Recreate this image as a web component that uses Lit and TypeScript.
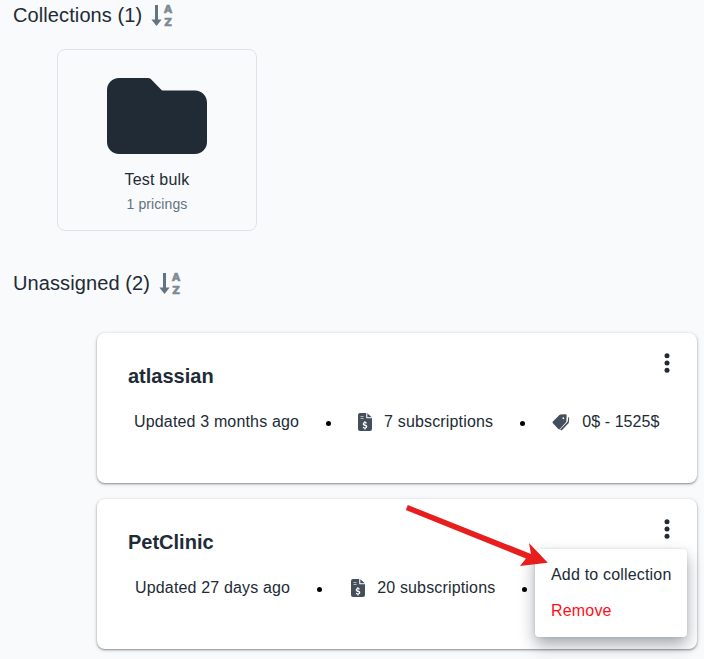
import {LitElement, html, css, svg} from 'lit';
import {customElement} from 'lit/decorators.js';

const sortIcon = html`<svg class="sort" viewBox="0 0 24 28" width="24" height="28">
  <path d="M4 4h3v14.500h3.600L5.500 25 .4 18.500H4z" fill="currentColor"/>
  <text class="sort-letter" x="17" y="12">A</text>
  <text class="sort-letter" x="17" y="25">Z</text>
</svg>`;

const billIcon = html`<svg class="icon" viewBox="0 0 14 18" width="14" height="18">
  <path fill="#454f5b" fill-rule="evenodd" d="M2 0h6.200v4.400c0 .5.400.9.900.9H14V16a2 2 0 0 1-2 2H2a2 2 0 0 1-2-2V2a2 2 0 0 1 2-2zM6.400 8v1a2 2 0 0 0-1.700 2c0 1.200 1 1.600 2.200 2 .9.300 1 .5 1 .8 0 .4-.4.600-.9.600-.6 0-1.100-.2-1.600-.6l-.7 1c.5.400 1.100.7 1.700.8v1h1.200v-1a2 2 0 0 0 1.700-2c0-1.200-.9-1.700-2.100-2.100-.9-.3-1.100-.5-1.100-.8 0-.3.300-.5.800-.5s.9.200 1.300.5l.7-1a3 3 0 0 0-1.500-.7V8z"/>
  <path fill="#454f5b" d="M9.300.2 13.800 4.200H9.300z"/>
  <path fill="none" stroke="#b4b9be" stroke-width="1" d="M2.600 3.500h3M2.600 5.500h3"/>
</svg>`;

const tagIcon = html`<svg class="icon" viewBox="0 0 20 17" width="18" height="17" preserveAspectRatio="none">
  <path fill="#454f5b" fill-rule="evenodd" d="M9 .6 15 .2c.7 0 1.300.6 1.300 1.300l-.4 6c0 .3-.1.6-.4.8L8.800 15c-.5.500-1.300.500-1.800 0L1 9.300c-.5-.5-.5-1.300 0-1.800L8.200 1c.2-.2.500-.4.800-.4zM12.600 3.200a1 1 0 1 0 0 2 1 1 0 0 0 0-2z"/>
  <path fill="#454f5b" d="M18.200 2.800c.7.400 1 1 .9 1.700l-.3 3.800c0 .4-.2.800-.5 1l-7 6.600c-.5.500-1.300.5-1.800 0l-.4-.4 8-7.600c.3-.3.500-.7.500-1.100z"/>
</svg>`;

const dotsIcon = html`<svg class="dots" viewBox="0 0 6 20" width="6" height="20">
  <circle cx="3" cy="2.800" r="2.500"/><circle cx="3" cy="10" r="2.500"/><circle cx="3" cy="17.200" r="2.500"/>
</svg>`;

const arrow = svg`<path d="M405.800 510 407.800 505 531 554 529 543 547.800 562.700 520 566 526 558.500z" fill="#e81e1e"/>`;

@customElement('app-root')
export class AppRoot extends LitElement {
  static styles = css`
    :host {
      display: block;
      position: relative;
      height: 659px;
      overflow: hidden;
      background: #f9fafb;
      font-family: 'Liberation Sans', Arial, sans-serif;
      color: #212b36;
    }

    .heading {
      display: flex;
      align-items: center;
      gap: 9px;
      height: 30px;
      padding-left: 13px;
      font-size: 20px;
      line-height: 30px;
      letter-spacing: 0.1px;
    }

    .sort {
      color: #637381;
      flex: none;
    }

    .sort-letter {
      font-family: 'DejaVu Sans', sans-serif;
      font-size: 10.5px;
      font-weight: 700;
      letter-spacing: 0;
      text-anchor: middle;
      fill: #7d8995;
      stroke: #7d8995;
      stroke-width: 0.6px;
    }

    .collections {
      display: flex;
      padding: 19px 0 37px 57px;
    }

    .collection {
      box-sizing: border-box;
      width: 200px;
      height: 182px;
      display: flex;
      flex-direction: column;
      align-items: center;
      padding-top: 28px;
      border: 1px solid #dfe3e8;
      border-radius: 8px;
    }

    .collection-name {
      margin-top: 15px;
      font-size: 16px;
      line-height: 22px;
      letter-spacing: 0.2px;
    }

    .collection-count {
      margin-top: 3px;
      font-size: 14px;
      line-height: 20px;
      letter-spacing: 0.1px;
      color: #637381;
    }

    .pricings {
      display: flex;
      flex-direction: column;
      gap: 16px;
      width: 600px;
      margin: 35px 0 0 97px;
    }

    .card {
      box-sizing: border-box;
      position: relative;
      height: 150px;
      padding: 30px 31px;
      background: #fff;
      border-radius: 8px;
      box-shadow: 0 1px 2px rgba(33, 43, 54, 0.45), 0 1px 4px rgba(33, 43, 54, 0.16);
    }

    .card-title {
      margin: 0;
      font-size: 20px;
      line-height: 26px;
      font-weight: 700;
    }

    .dots {
      position: absolute;
      top: 20px;
      right: 27px;
      fill: #212b36;
    }

    .meta {
      display: flex;
      align-items: center;
      gap: 26px;
      margin-top: 21px;
      padding-left: 6px;
      font-size: 16px;
      line-height: 24px;
      letter-spacing: 0.16px;
    }

    .meta.second {
      padding-left: 7px;
    }

    .meta.second .bullet {
      margin-right: 3.500px;
    }

    .meta-item {
      display: flex;
      align-items: center;
      gap: 12px;
      white-space: nowrap;
    }

    .price {
      letter-spacing: 0.08px;
    }

    .bullet {
      width: 5px;
      height: 5px;
      border-radius: 50%;
      background: #000;
      margin: 2px 1.500px 0 0.5px;
    }

    .menu {
      position: absolute;
      top: 50px;
      right: 10px;
      width: 152px;
      height: 88px;
      box-sizing: border-box;
      padding: 8px 0 0 16px;
      background: #fff;
      border-radius: 4px;
      box-shadow: 0 8px 16px rgba(33, 43, 54, 0.4), 0 0 3px rgba(33, 43, 54, 0.12);
      font-size: 16px;
      letter-spacing: 0.18px;
    }

    .menu-item {
      height: 36px;
      line-height: 36px;
      white-space: nowrap;
    }

    .menu-item.danger {
      color: #ff0f17;
    }

    .arrow {
      position: absolute;
      inset: 0;
      pointer-events: none;
    }
  `;

  render() {
    return html`
      <div class="heading">Collections (1) ${sortIcon}</div>
      <div class="collections">
        <div class="collection">
          <svg viewBox="0 0 100 76" width="100" height="76">
            <path fill="#212b36" d="M12 0h29c1 0 2 .4 2.800 1.100L55 12.500h33c6.600 0 12 5.400 12 12V64c0 6.600-5.400 12-12 12H12C5.400 76 0 70.600 0 64V12C0 5.400 5.400 0 12 0z"/>
          </svg>
          <div class="collection-name">Test bulk</div>
          <div class="collection-count">1 pricings</div>
        </div>
      </div>
      <div class="heading">Unassigned (2) ${sortIcon}</div>
      <div class="pricings">
        <div class="card">
          ${dotsIcon}
          <h3 class="card-title">atlassian</h3>
          <div class="meta">
            <span>Updated 3 months ago</span>
            <span class="bullet"></span>
            <span class="meta-item">${billIcon}7 subscriptions</span>
            <span class="bullet"></span>
            <span class="meta-item price">${tagIcon}0$ - 1525$</span>
          </div>
        </div>
        <div class="card">
          ${dotsIcon}
          <h3 class="card-title">PetClinic</h3>
          <div class="meta second">
            <span>Updated 27 days ago</span>
            <span class="bullet"></span>
            <span class="meta-item">${billIcon}20 subscriptions</span>
            <span class="bullet"></span>
          </div>
          <div class="menu">
            <div class="menu-item">Add to collection</div>
            <div class="menu-item danger">Remove</div>
          </div>
        </div>
      </div>
      <svg class="arrow" viewBox="0 0 704 659" width="704" height="659">${arrow}</svg>
    `;
  }
}
